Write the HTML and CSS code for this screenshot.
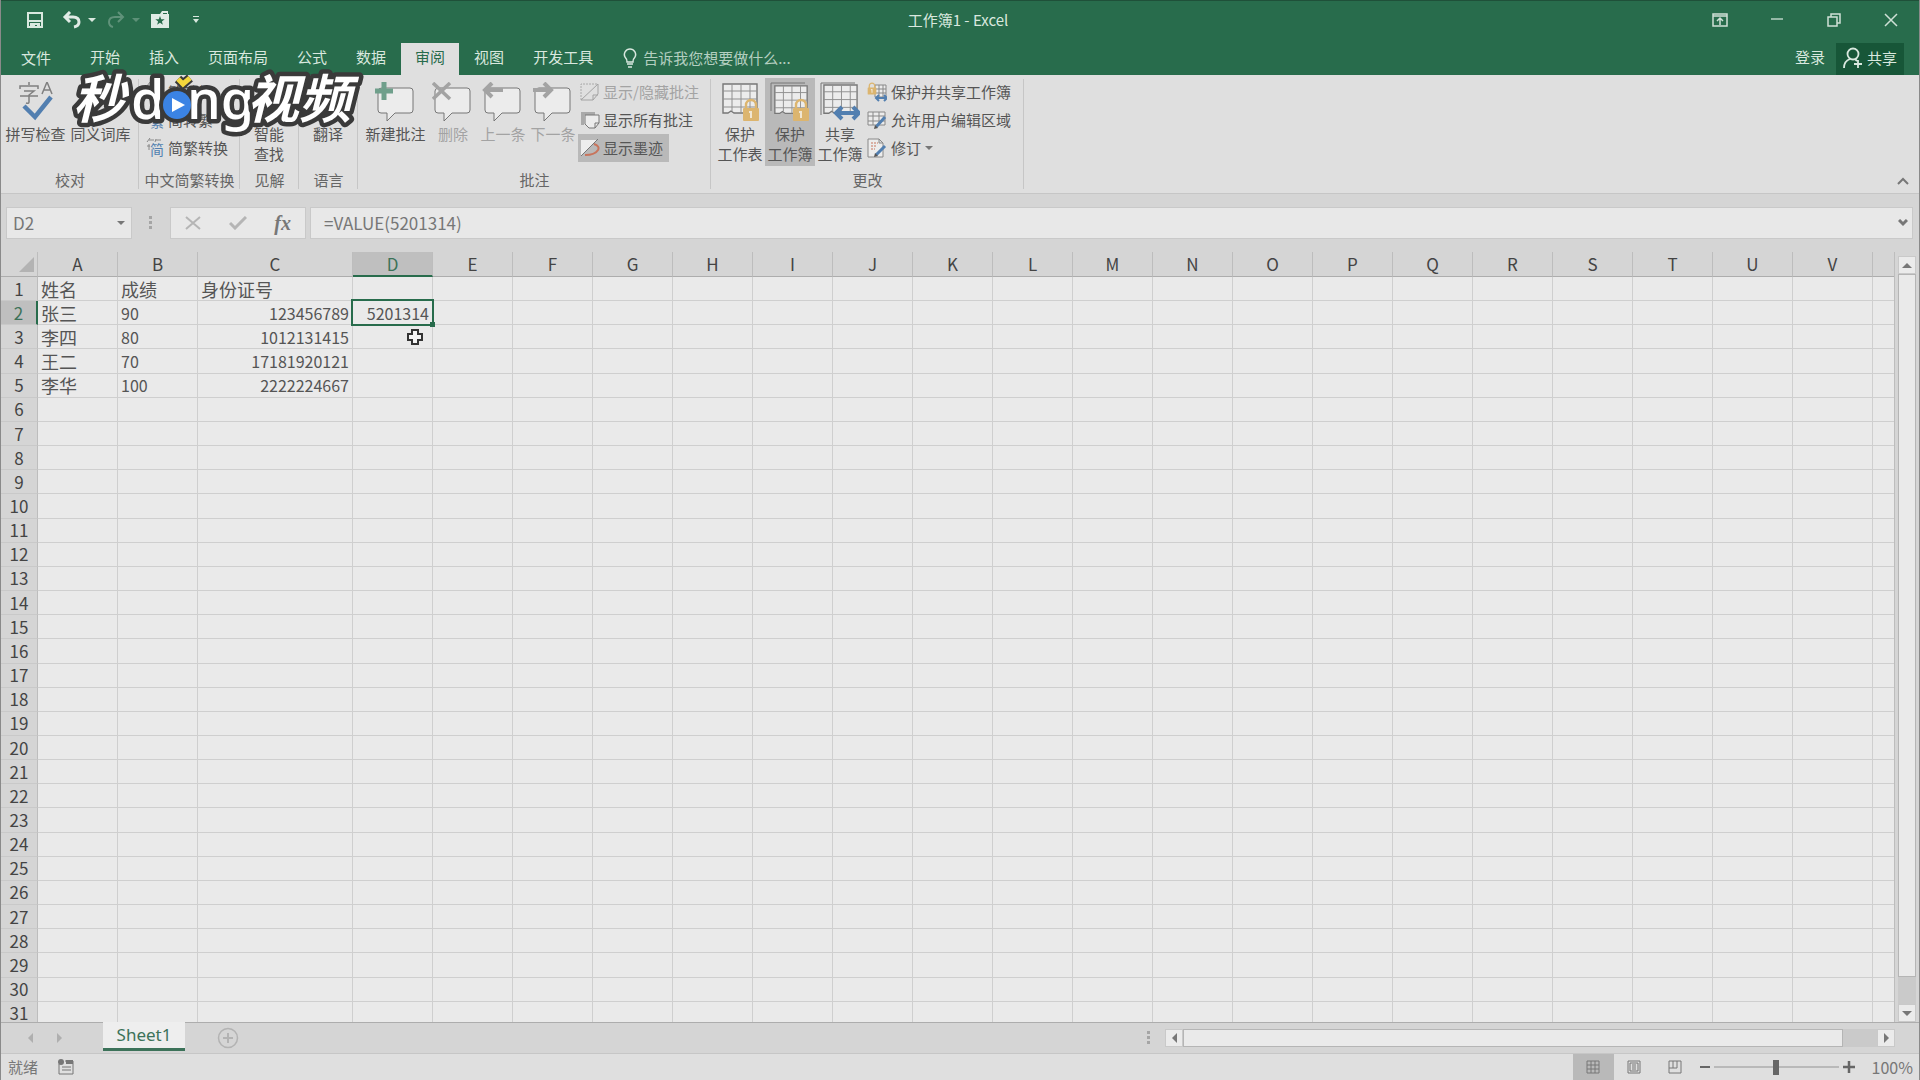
FILE: index.html
```
<!DOCTYPE html>
<html lang="zh-CN">
<head>
    <meta charset="UTF-8">
    <meta name="viewport" content="width=device-width, initial-scale=1.0">
    <title>工作簿1 - Excel</title>
    <link rel="stylesheet" href="styles.css">
</head>
<body>

<!-- Shared icon shapes -->
<svg class="defs" width="0" height="0" aria-hidden="true">
    <symbol id="comment" viewBox="0 0 42 40">
        <path class="bubble" d="M7 6h28q3 0 3 3v19q0 3-3 3H20l-8 8v-8H6q-3 0-3-3V9q0-3 4-3z"/>
    </symbol>
    <symbol id="sheet" viewBox="0 0 40 40">
        <path d="M3 2h34v29H14l-3-2-3 2H3z" fill="#ececec" stroke="#777" stroke-width="1.4"/>
        <path d="M3 9h34M3 17h34M3 25h34M12 2v27M21 2v29M30 2v29" stroke="#909090" fill="none"/>
    </symbol>
    <symbol id="lock" viewBox="0 0 18 24">
        <path d="M4 11V7a5 5 0 0 1 10 0v4" fill="none" stroke="#dcb56f" stroke-width="2.4"/>
        <rect x="1" y="10" width="16" height="13" rx="1" fill="#dcb56f"/>
        <path d="M7 13h3v7H8v-5H7z" fill="#f0e6d2"/>
    </symbol>
</svg>

<div class="window">
    <!-- Title bar -->
    <header class="titlebar">
        <div class="quick-access">
            <button class="qa-btn" aria-label="保存"><svg width="18" height="18" viewBox="0 0 18 18"><path fill="none" stroke="#d9e8df" stroke-width="2" d="M2 2h14v14H2z"/><path fill="#d9e8df" d="M2 9h14v2H2zM4 12h10v5h-3v-3H9v3H4z"/></svg></button>
            <button class="qa-btn undo" aria-label="撤消"><svg width="20" height="18" viewBox="0 0 20 18"><path fill="none" stroke="#e0ebe5" stroke-width="3" d="M8 1L3 6l5 5M3 6h8q6 0 6 5 0 4-5 5"/></svg><i class="caret"></i></button>
            <button class="qa-btn redo" aria-label="恢复"><svg width="20" height="18" viewBox="0 0 20 18"><path fill="none" stroke="#e0ebe5" stroke-width="2" d="M12 1l5 5-5 5M17 6H9q-6 0-6 5 0 4 4 5"/></svg><i class="caret"></i></button>
            <button class="qa-btn" aria-label="收藏夹"><svg width="20" height="18" viewBox="0 0 20 18"><path fill="#e0ebe5" d="M1 3h9l2-3h6v3h1v14H1z"/><path fill="#286c4c" d="M10 5l1.200 3.300h3.500l-2.800 2.100 1 3.400L10 11.800l-2.900 2 1-3.400-2.800-2.100h3.500zM13 2h4v1h-4z"/></svg></button>
            <button class="qa-btn customize" aria-label="自定义"><svg width="8" height="8" viewBox="0 0 8 8"><path fill="#d9e8df" d="M1 0h6v1H1zM1 3h6L4 7z"/></svg></button>
        </div>
        <h1 class="title">工作簿1 - Excel</h1>
        <div class="window-buttons">
            <button aria-label="功能区显示选项"><svg width="16" height="14" viewBox="0 0 16 14"><path fill="none" stroke="#cfe0d6" stroke-width="1.5" d="M1 1h14v12H1zM1 3h14M8 12V5M5 8l3-3 3 3"/></svg></button>
            <button aria-label="最小化"><svg width="14" height="14" viewBox="0 0 14 14"><path stroke="#b9d2c4" stroke-width="1.500" d="M1 6h12"/></svg></button>
            <button aria-label="还原"><svg width="14" height="14" viewBox="0 0 14 14"><path fill="none" stroke="#cfe0d6" stroke-width="1.500" d="M1 4h9v9H1zM4 4V1h9v9h-3"/></svg></button>
            <button aria-label="关闭"><svg width="14" height="14" viewBox="0 0 14 14"><path stroke="#cfe0d6" stroke-width="1.500" d="M1 1l12 12M13 1L1 13"/></svg></button>
        </div>
    </header>

    <!-- Ribbon tabs -->
    <nav class="tabs">
        <button class="tab file">文件</button>
        <button class="tab">开始</button>
        <button class="tab">插入</button>
        <button class="tab">页面布局</button>
        <button class="tab">公式</button>
        <button class="tab">数据</button>
        <button class="tab active">审阅</button>
        <button class="tab">视图</button>
        <button class="tab">开发工具</button>
        <label class="tell-me">
            <svg width="14" height="20" viewBox="0 0 14 20"><path fill="none" stroke="#d9e8df" stroke-width="1.500" d="M4 14q0-3-2-5a5.600 5.600 0 1 1 10 0q-2 2-2 5z"/><path stroke="#d9e8df" stroke-width="1.500" d="M4 16h6M5 19h4"/></svg>
            <input type="text" placeholder="告诉我您想要做什么...">
        </label>
        <button class="sign-in">登录</button>
        <button class="share"><svg width="20" height="22" viewBox="0 0 20 22"><g fill="none" stroke="#d9e8df" stroke-width="1.800"><circle cx="10" cy="7" r="5.500"/><path d="M1 21q0-7 6-9M12 12l2 2M15 13v8M11 17h8"/></g></svg>共享</button>
    </nav>

    <!-- Ribbon -->
    <section class="ribbon">
        <div class="group">
            <div class="tools proofing">
                <button class="big wide">
                    <svg width="36" height="40" viewBox="0 0 36 40"><g fill="none" stroke="#808080" stroke-width="1.500"><path d="M11 0v3M2 7V4h18v3M6 9h10l-5 4v7q0 2-3 1M2 14h18M24 12l5-12 5 12M26 8h6"/></g><path fill="none" stroke="#527fb0" stroke-width="4.500" d="M6 24l11 11 16-20"/></svg>
                    拼写检查
                </button>
                <button class="big wide">
                    <svg width="36" height="40" viewBox="0 0 36 40"></svg>
                    同义词库
                </button>
            </div>
            <h2>校对</h2>
        </div>
        <div class="group">
            <div class="tools chinese">
                <div class="stack">
                    <button class="small"><svg width="18" height="20" viewBox="0 0 18 20"><path class="zh-back" d="M4 0L1 4M3 2h5M10 1l-1 3M10 2h5M3 6v6M1 8h3"/><text x="4" y="17">繁</text></svg>繁转简</button>
                    <button class="small"><svg width="18" height="20" viewBox="0 0 18 20"><path class="zh-back" d="M4 0L1 4M3 2h5M10 1l-1 3M10 2h5M3 6v6M1 8h3"/><text x="4" y="17">繁</text></svg>简转繁</button>
                    <button class="small"><svg width="18" height="20" viewBox="0 0 18 20"><path class="zh-back" d="M4 0L1 4M3 2h5M10 1l-1 3M10 2h5M3 6v6M1 8h3"/><text x="4" y="17">简</text></svg>简繁转换</button>
                </div>
            </div>
            <h2>中文简繁转换</h2>
        </div>
        <div class="group">
            <div class="tools narrow">
                <button class="big">
                    <svg width="36" height="40" viewBox="0 0 36 40"></svg>
                    智能<br>查找
                </button>
            </div>
            <h2>见解</h2>
        </div>
        <div class="group">
            <div class="tools narrow">
                <button class="big">
                    <svg width="36" height="40" viewBox="0 0 36 40"></svg>
                    翻译
                </button>
            </div>
            <h2>语言</h2>
        </div>
        <div class="group">
            <div class="tools comments">
                <button class="big wide">
                    <svg width="42" height="40" viewBox="0 0 42 40"><use href="#comment"/><path stroke="#6f9f8b" stroke-width="5" d="M0 9h18M9 0v18"/></svg>
                    新建批注
                </button>
                <button class="big" disabled>
                    <svg width="42" height="40" viewBox="0 0 42 40"><use href="#comment"/><path stroke="#a3a3a3" stroke-width="3.500" d="M1 1l17 16M18 1L1 17"/></svg>
                    删除
                </button>
                <button class="big" disabled>
                    <svg width="42" height="40" viewBox="0 0 42 40"><use href="#comment"/><path fill="none" stroke="#a3a3a3" stroke-width="4" d="M3 8h18M10 1L3 8l7 7"/></svg>
                    上一条
                </button>
                <button class="big" disabled>
                    <svg width="42" height="40" viewBox="0 0 42 40"><use href="#comment"/><path fill="none" stroke="#a3a3a3" stroke-width="4" d="M1 8h18M12 1l7 7-7 7"/></svg>
                    下一条
                </button>
                <div class="stack">
                    <button class="small" disabled><svg width="20" height="20" viewBox="0 0 20 20"><path fill="none" stroke="#aaa" stroke-dasharray="2 1" d="M1 18V2h17"/><path fill="none" stroke="#a3a3a3" d="M1 18L18 2v10l-5 6H1M13 18v-5h5"/></svg>显示/隐藏批注</button>
                    <button class="small"><svg width="20" height="20" viewBox="0 0 20 20"><path fill="#a9a9a9" d="M1 2h14v3H4v10H1z"/><path fill="#ececec" stroke="#777" d="M5 5h14v8l-4 5h-6l-4-4zM15 18v-5h4"/></svg>显示所有批注</button>
                    <button class="small pressed"><svg width="20" height="20" viewBox="0 0 20 20"><path fill="#eee" d="M1 2h16L1 18z"/><path fill="none" stroke="#777" d="M1 18L18 1"/><path fill="none" stroke="#c8745c" stroke-width="2" d="M14 6q6 2 4 6-3 5-13 5"/></svg>显示墨迹</button>
                </div>
            </div>
            <h2>批注</h2>
        </div>
        <div class="group">
            <div class="tools changes">
                <button class="big">
                    <svg width="40" height="40" viewBox="0 0 40 40"><use href="#sheet" width="40" height="40"/><use href="#lock" x="22" y="16" width="18" height="24"/></svg>
                    保护<br>工作表
                </button>
                <button class="big pressed">
                    <svg width="40" height="40" viewBox="0 0 40 40"><path fill="none" stroke="#777" d="M1 29V1h34"/><use href="#sheet" x="2" y="2" width="38" height="38"/><use href="#lock" x="22" y="16" width="18" height="24"/></svg>
                    保护<br>工作簿
                </button>
                <button class="big">
                    <svg width="40" height="40" viewBox="0 0 40 40"><path fill="none" stroke="#777" d="M1 33V1h34"/><use href="#sheet" x="1" y="1" width="39" height="39"/><path fill="none" stroke="#527fb0" stroke-width="4" d="M17 31h20M22 25l-6 6 6 6M33 25l6 6-6 6"/></svg>
                    共享<br>工作簿
                </button>
                <div class="stack">
                    <button class="small"><svg width="20" height="20" viewBox="0 0 20 20"><path fill="#ececec" stroke="#888" d="M8 3h11v12H8zM8 7h11M8 11h11M12 3v12M16 3v12"/><use href="#lock" x="0" y="0" width="10" height="13"/><path fill="none" stroke="#527fb0" stroke-width="2" d="M10 16h9M12 13l-3 3 3 3M17 13l3 3-3 3"/></svg>保护并共享工作簿</button>
                    <button class="small"><svg width="20" height="20" viewBox="0 0 20 20"><path fill="#ececec" stroke="#888" d="M1 2h17v13H1zM1 6h17M1 11h17M6 2v13M12 2v13"/><path stroke="#527fb0" stroke-width="3" d="M18 7L9 17"/><path fill="#555" d="M7 19l1-4 3 3z"/></svg>允许用户编辑区域</button>
                    <button class="small"><svg width="20" height="20" viewBox="0 0 20 20"><path fill="#ececec" stroke="#888" d="M1 1h11l4 4v14H1zM12 1v4h4"/><path stroke="#c8745c" stroke-dasharray="2 1" d="M4 5h7M4 8h6M4 11h4"/><path stroke="#527fb0" stroke-width="3" d="M18 8L9 17"/><path fill="#555" d="M7 19l1-4 3 3z"/></svg>修订<i class="caret"></i></button>
                </div>
            </div>
            <h2>更改</h2>
        </div>
        <button class="collapse" aria-label="折叠功能区"><svg width="12" height="8" viewBox="0 0 12 8"><path fill="none" stroke="#777" stroke-width="2" d="M1 7l5-5 5 5"/></svg></button>

        <!-- Video watermark, lies over the ribbon -->
        <svg class="watermark" width="300" height="72" viewBox="0 0 300 72" role="img" aria-label="秒懂视频">
            <g class="mark-text">
                <text x="3" y="47" class="mark-zh">秒</text>
                <text x="61" y="48" class="mark-en">d</text>
                <circle cx="107" cy="34" r="15" fill="#3a3a3a" stroke="#3a3a3a" stroke-width="6"/>
                <text x="117" y="48" class="mark-en">ng</text>
                <text x="177" y="47" class="mark-zh">视频</text>
            </g>
            <circle cx="107" cy="34" r="14" fill="#3b83e4"/>
            <path d="M102 27v14l13-7z" fill="#fff"/>
            <path d="M108 8l5 5 7-6" fill="none" stroke="#3a3a3a" stroke-width="9"/>
            <path d="M108 8l5 5 7-6" fill="none" stroke="#f3d63c" stroke-width="5"/>
        </svg>
    </section>

    <!-- Formula bar -->
    <section class="formula-bar">
        <div class="name-box">
            <input type="text" value="D2" aria-label="名称框">
            <i class="caret"></i>
        </div>
        <span class="dots"></span>
        <div class="fx-box">
            <button aria-label="取消"><svg width="16" height="14" viewBox="0 0 16 14"><path stroke="#b5b5b5" stroke-width="2" d="M1 1l14 12M15 1L1 13"/></svg></button>
            <button aria-label="输入"><svg width="18" height="14" viewBox="0 0 18 14"><path fill="none" stroke="#b5b5b5" stroke-width="3" d="M1 7l5 5L17 1"/></svg></button>
            <button class="fx">fx</button>
        </div>
        <div class="formula">
            <input type="text" value="=VALUE(5201314)" aria-label="编辑栏">
            <svg width="10" height="8" viewBox="0 0 10 8"><path fill="none" stroke="#777" stroke-width="3" d="M1 1l4 4 4-4"/></svg>
        </div>
    </section>

    <!-- Worksheet -->
    <main class="sheet">
        <div class="grid">
            <table id="cells">
                <thead><tr><th class="corner"><svg width="15" height="15" viewBox="0 0 15 15"><path fill="#b3b3b3" d="M15 0v15H0z"/></svg></th></tr></thead>
                <tbody></tbody>
            </table>
        </div>
        <div class="vscroll">
            <button aria-label="向上滚动"><i class="arrow up"></i></button>
            <div class="thumb"></div>
            <button aria-label="向下滚动"><i class="arrow down"></i></button>
        </div>
    </main>

    <!-- Sheet tabs -->
    <section class="sheet-tabs">
        <div class="sheet-nav">
            <button aria-label="上一个工作表"><i class="arrow left"></i></button>
            <button aria-label="下一个工作表"><i class="arrow right"></i></button>
        </div>
        <button class="sheet-tab">Sheet1</button>
        <button class="add-sheet" aria-label="新工作表"><svg width="22" height="22" viewBox="0 0 22 22"><g fill="none" stroke="#b3b3b3" stroke-width="1.500"><circle cx="11" cy="11" r="9.500"/><path stroke-width="2" d="M6 11h10M11 6v10"/></g></svg></button>
        <span class="dots"></span>
        <div class="hscroll">
            <button aria-label="向左滚动"><i class="arrow left"></i></button>
            <div class="thumb"></div>
            <button aria-label="向右滚动"><i class="arrow right"></i></button>
        </div>
    </section>

    <!-- Status bar -->
    <footer class="status">
        <span>就绪</span>
        <svg class="macro" width="16" height="16" viewBox="0 0 16 16"><path fill="none" stroke="#777" d="M1 5v10h14V2H7M4 8h9M4 11h9"/><circle cx="3" cy="3" r="3" fill="#777"/><path fill="#777" d="M8 1h7v4H8z"/></svg>
        <div class="views">
            <button class="pressed" aria-label="普通"><svg width="14" height="14" viewBox="0 0 14 14"><path fill="none" stroke="#777" d="M1 1h12v12H1zM5 1v12M9 1v12M1 5h12M1 9h12"/></svg></button>
            <button aria-label="页面布局"><svg width="14" height="14" viewBox="0 0 14 14"><path fill="none" stroke="#777" d="M1 1h12v12H1zM3 3h8v8H3zM5 5h4M5 7h4M5 9h4"/></svg></button>
            <button aria-label="分页预览"><svg width="14" height="14" viewBox="0 0 14 14"><path fill="none" stroke="#777" d="M1 1h12v12H1zM1 8h8V1M5 1v7"/></svg></button>
        </div>
        <div class="zoom">
            <button aria-label="缩小"><svg width="10" height="10" viewBox="0 0 10 10"><path stroke="#666" stroke-width="2" d="M0 5h10"/></svg></button>
            <input type="range" min="0" max="200" value="100" aria-label="缩放">
            <button aria-label="放大"><svg width="12" height="12" viewBox="0 0 12 12"><path stroke="#666" stroke-width="2.500" d="M0 6h12M6 0v12"/></svg></button>
            <span>100%</span>
        </div>
    </footer>
</div>

<script>
    const columns = "ABCDEFGHIJKLMNOPQRSTUV".split("");
    const data = [
        ["姓名", "成绩", "身份证号"],
        ["张三", "90", 123456789, 5201314],
        ["李四", "80", 1012131415],
        ["王二", "70", 17181920121],
        ["李华", "100", 2222224667]
    ];

    // Column headers, with one unnamed column that fills the rest
    const head = document.querySelector("#cells thead tr");
    columns.concat("").forEach(name => {
        const th = document.createElement("th");
        th.textContent = name;
        if (name) th.className = "col-" + name.toLowerCase();
        if (name === "D") th.classList.add("current");
        head.appendChild(th);
    });

    // Rows
    const body = document.querySelector("#cells tbody");
    for (let r = 0; r < 31; r++) {
        const tr = body.insertRow();
        const th = document.createElement("th");
        th.textContent = r + 1;
        if (r === 1) th.className = "current";
        tr.appendChild(th);
        for (let c = 0; c <= columns.length; c++) {
            const td = tr.insertCell();
            const value = (data[r] || [])[c];
            if (value === undefined) continue;
            td.textContent = value;
            if (typeof value === "number") td.className = "number";
            else if (isNaN(value)) td.className = "zh";
        }
    }

    // Active cell and the mouse pointer below it
    body.rows[1].cells[4].classList.add("selected");
    body.rows[2].cells[4].className = "pointer";
    body.rows[2].cells[4].innerHTML = '<svg width="18" height="18" viewBox="0 0 18 18"><path fill="#f4f4f4" stroke="#333" stroke-width="2" d="M6 2h6v4h4v6h-4v4H6v-4H2V6h4z"/></svg>';
</script>

</body>
</html>
```
FILE: styles.css
```
/* General Reset */
* {
    margin: 0;
    padding: 0;
    box-sizing: border-box;
}

body {
    font-family: "Noto Sans CJK SC", sans-serif;
    font-size: 15px;
    line-height: 20px;
    color: #555;
    background-color: #d5d5d5;
}

button, input {
    font: inherit;
    color: inherit;
    background: none;
    border: none;
    outline: none;
}

button {
    display: flex;
    align-items: center;
    justify-content: center;
    white-space: nowrap;
}

h1, h2 {
    font-size: 15px;
    font-weight: normal;
}

svg {
    flex: none;
}

.defs {
    position: absolute;
}

.window {
    display: flex;
    flex-direction: column;
    height: 100vh;
    border-left: 1px solid #8a8a8a;
    border-right: 1px solid #8a8a8a;
    overflow: hidden;
}

.caret {
    flex: none;
    border: 4px solid transparent;
    border-top-color: currentColor;
    border-bottom: none;
}

.dots {
    width: 3px;
    height: 14px;
    background: repeating-linear-gradient(#a5a5a5 0 3px, transparent 3px 5px);
}

/* Title bar */
.titlebar {
    display: grid;
    grid-template-columns: 1fr auto 1fr;
    align-items: center;
    height: 43px;
    padding-bottom: 4px;
    background-color: #286c4c;
    border-top: 1px solid #1f5039;
    color: #d9e8df;
}

.title {
    padding-right: 4px;
}

.quick-access {
    display: flex;
    align-items: center;
    gap: 10px;
    padding-left: 25px;
}

.qa-btn {
    gap: 6px;
}

.undo {
    margin-left: 8px;
}

.redo {
    opacity: 0.3;
}

.customize {
    margin-left: 12px;
}

.window-buttons {
    display: flex;
    justify-content: flex-end;
}

.window-buttons button {
    width: 57px;
    height: 38px;
}

/* Ribbon tabs */
.tabs {
    display: flex;
    gap: 1px;
    height: 32px;
    background-color: #286c4c;
    color: #d9e8df;
}

.tab {
    padding: 0 14px 4px;
}

.tab.file {
    padding: 0 20px 2px;
    margin-right: 4px;
}

.tab.active {
    background-color: #dfdfdf;
    color: #286c4c;
}

.tell-me {
    display: flex;
    align-items: center;
    gap: 6px;
    margin-left: 15px;
    padding-bottom: 2px;
}

.tell-me input {
    width: 200px;
}

.tell-me input::placeholder {
    color: #b4cfc0;
}

.sign-in {
    margin-left: auto;
    padding: 0 10px 4px;
}

.share {
    gap: 4px;
    padding: 0 7px 2px;
    margin-right: 15px;
    background-color: #175638;
}

/* Ribbon */
.ribbon {
    position: relative;
    display: flex;
    height: 119px;
    background-color: #dfdfdf;
    border-bottom: 1px solid #c6c6c6;
}

.group {
    display: flex;
    flex-direction: column;
    justify-content: space-between;
    padding: 3px 0 0;
    position: relative;
}

.group::after {
    content: "";
    position: absolute;
    top: 4px;
    right: 0;
    bottom: 4px;
    border-right: 1px solid #c6c6c6;
}

.group h2 {
    text-align: center;
    line-height: 26px;
    color: #666;
}

.tools {
    display: flex;
    align-items: flex-start;
}

.proofing {
    padding: 0 6px 0 2px;
}

.chinese {
    padding: 0 6px 0 5px;
}

.narrow {
    padding: 0 5px 0 4px;
}

.comments {
    padding: 0 6px 0 5px;
}

.changes {
    padding: 0 7px 0 4px;
}

.big {
    flex-direction: column;
    justify-content: flex-start;
    width: 50px;
    height: 88px;
    padding-top: 4px;
}

.big svg {
    margin-bottom: 2px;
}

.big.wide {
    width: 65px;
}

.stack {
    display: flex;
    flex-direction: column;
    align-items: flex-start;
}

.small {
    gap: 4px;
    height: 28px;
    padding: 0 6px 0 2px;
}

.comments .small {
    gap: 3px;
}

.pressed {
    background-color: #b9b9b9;
}

.small .caret {
    color: #777;
}

button:disabled {
    color: #a3a3a3;
}

.bubble {
    fill: #ececec;
    stroke: #777;
    stroke-width: 1;
}

.big:disabled .bubble {
    fill: #e2dcdf;
    stroke: #b9b3b6;
}

.chinese text {
    font-size: 14px;
    fill: #527fb0;
}

.zh-back {
    fill: none;
    stroke: #888;
}

.collapse {
    align-self: flex-end;
    margin: 0 10px 8px auto;
}

/* Watermark */
.watermark {
    position: absolute;
    top: -4px;
    left: 69px;
    overflow: visible;
}

.mark-text text {
    fill: #fff;
    stroke: #3a3a3a;
    stroke-width: 9px;
    stroke-linejoin: round;
    paint-order: stroke;
}

.mark-text .mark-zh {
    font: italic 700 52px "Noto Sans CJK SC", sans-serif;
}

.mark-text .mark-en {
    font: 500 54px "Noto Sans", sans-serif;
}

/* Formula bar */
.formula-bar {
    display: flex;
    align-items: center;
    height: 58px;
    padding: 0 6px 0 5px;
    font-size: 17px;
    color: #777;
}

.name-box, .fx-box, .formula {
    display: flex;
    align-items: center;
    height: 32px;
    background-color: #e8e8e8;
    border: 1px solid #c9c9c9;
}

.name-box {
    width: 126px;
    padding: 0 6px;
}

.name-box input {
    flex: 1;
    min-width: 0;
}

.formula-bar .dots {
    margin: 0 18px 0 17px;
}

.fx-box {
    width: 136px;
    margin-right: 4px;
}

.fx-box button {
    flex: 1;
}

.fx-box .fx {
    font: italic 700 20px "Liberation Serif", serif;
}

.formula {
    flex: 1;
    padding: 0 4px 0 13px;
}

.formula input {
    flex: 1;
}

/* Worksheet */
.sheet {
    flex: 1;
    display: flex;
    gap: 3px;
    min-height: 0;
    padding-right: 3px;
}

.grid {
    flex: 1;
    overflow: hidden;
    border-right: 1px solid #bdbdbd;
}

#cells {
    table-layout: fixed;
    width: 100%;
    height: calc(100% + 4px);
    border-collapse: separate;
    border-spacing: 0;
    line-height: 22px;
    background-color: #eaeaea;
}

#cells th {
    width: 80px;
    font-size: 17px;
    font-weight: normal;
    color: #444;
    background-color: #d5d5d5;
    border-right: 1px solid #bdbdbd;
    border-bottom: 1px solid #c9c9c9;
}

#cells thead th {
    height: 25px;
    border-bottom-color: #adadad;
}

#cells .corner {
    width: 37px;
    line-height: 0;
    text-align: right;
    padding-right: 3px;
}

#cells .col-c {
    width: 155px;
}

#cells thead th:last-child {
    width: auto;
    border-right: none;
}

#cells th.current {
    color: #3c7259;
    background-color: #bfbfbf;
}

#cells thead th.current {
    border-bottom: 2px solid #286c4c;
}

#cells tbody th.current {
    border-right: 2px solid #286c4c;
}

#cells td {
    height: 24px;
    padding: 0 3px;
    font-size: 16px;
    white-space: nowrap;
    border-right: 1px solid #cfcfcf;
    border-bottom: 1px solid #cfcfcf;
}

#cells td.zh {
    font-size: 18px;
}

#cells td:last-child {
    border-right: none;
}

#cells .number {
    text-align: right;
}

#cells .selected {
    position: relative;
}

/* Selection frame and its fill handle */
.selected::before {
    content: "";
    position: absolute;
    inset: -2px;
    border: 2px solid #286c4c;
}

.selected::after {
    content: "";
    position: absolute;
    right: -3px;
    bottom: -3px;
    width: 5px;
    height: 5px;
    background-color: #286c4c;
}

#cells .pointer {
    line-height: 0;
    text-align: right;
    padding-right: 8px;
}

/* Scroll bars */
.arrow {
    border: 5px solid transparent;
}

.arrow.up {
    border-bottom-color: #777;
    border-top: none;
}

.arrow.down {
    border-top-color: #777;
    border-bottom: none;
}

.arrow.left {
    border-right-color: #777;
    border-left: none;
}

.arrow.right {
    border-left-color: #777;
    border-right: none;
}

.vscroll, .hscroll {
    display: flex;
    background-color: #cacaca;
}

.vscroll {
    flex-direction: column;
    width: 18px;
    margin-top: 4px;
}

.vscroll button, .hscroll button {
    flex: none;
    width: 18px;
    height: 18px;
    background-color: #ebebeb;
    border: 1px solid #c9c9c9;
}

.thumb {
    flex: 1;
    background-color: #eaeaea;
    border: 1px solid #b5b5b5;
}

.vscroll .thumb {
    margin-bottom: 27px;
}

.hscroll .thumb {
    margin-right: 34px;
}

/* Sheet tabs */
.sheet-tabs {
    display: flex;
    align-items: center;
    height: 32px;
    padding-right: 24px;
    border-top: 1px solid #adadad;
    border-bottom: 1px solid #c6c6c6;
}

.sheet-nav {
    display: flex;
    gap: 24px;
    width: 102px;
    padding-left: 27px;
    opacity: 0.4;
}

.sheet-tab {
    align-self: flex-start;
    width: 82px;
    height: 29px;
    margin-top: -1px;
    padding-bottom: 2px;
    font: 17px "Noto Sans", sans-serif;
    color: #3c7259;
    background-color: #eee;
    border-bottom: 3px solid #3c7259;
}

.add-sheet {
    margin-left: 32px;
}

.sheet-tabs .dots {
    margin: 0 15px 0 auto;
}

.hscroll {
    width: 38vw;
}

/* Status bar */
.status {
    display: flex;
    align-items: center;
    height: 26px;
    padding: 0 6px 0 7px;
    color: #777;
    background-color: #dfdfdf;
}

.macro {
    margin-left: 20px;
}

.views {
    display: flex;
    margin-left: auto;
}

.views button {
    width: 41px;
    height: 26px;
}

.zoom {
    display: flex;
    align-items: center;
    gap: 4px;
    margin-left: 4px;
}

.zoom span {
    margin-left: 13px;
    font-size: 16px;
}

.zoom input {
    appearance: none;
    width: 125px;
    height: 16px;
    background: linear-gradient(#b9b9b9, #b9b9b9) center / 100% 2px no-repeat;
}

.zoom input::-webkit-slider-thumb {
    appearance: none;
    width: 6px;
    height: 15px;
    background-color: #666;
}
```
